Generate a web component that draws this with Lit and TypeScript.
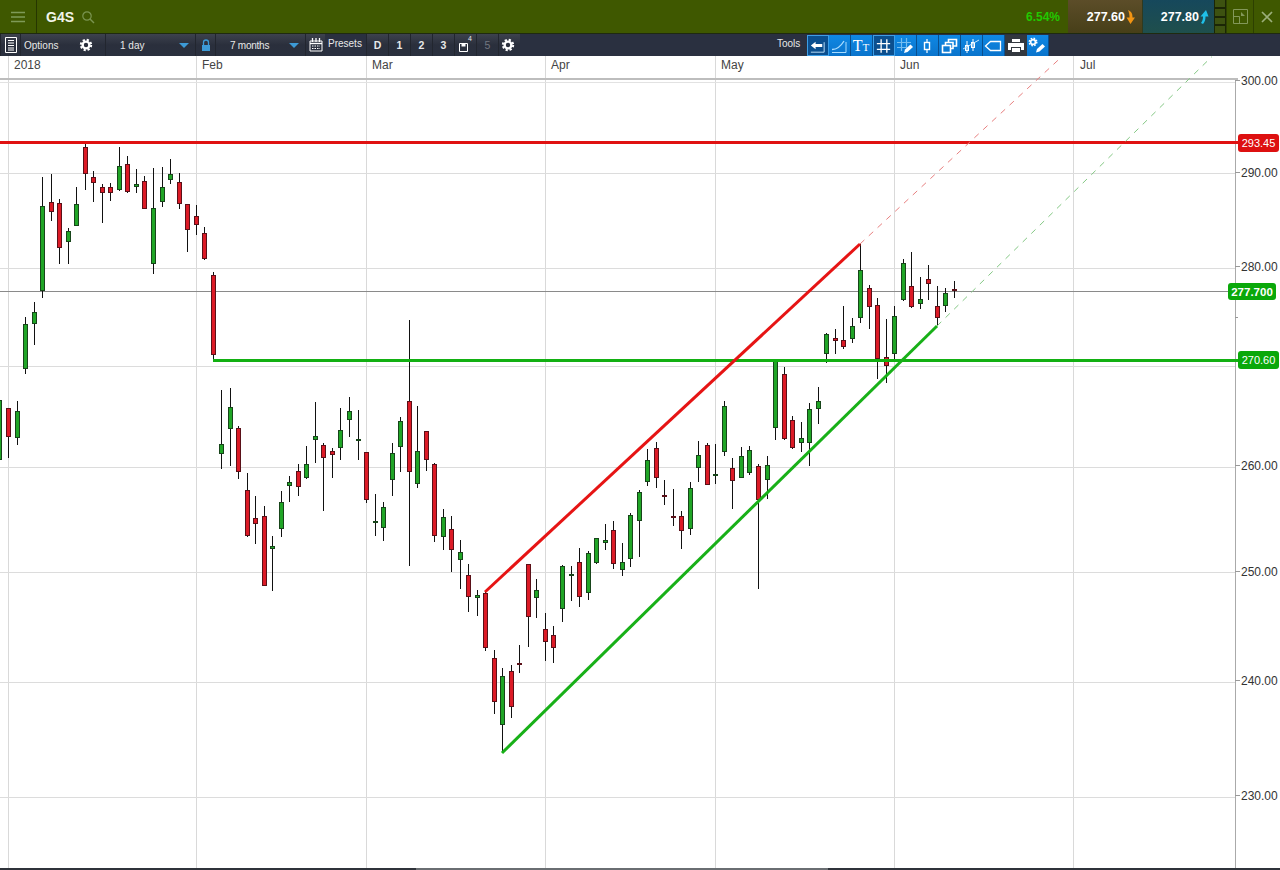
import { LitElement, html, css, svg } from "lit";
import { customElement } from "lit/decorators.js";

type C = [number, number, number, number, number, "g" | "r"];
const candles: C[] = [
  [-1,395,465,400,460,"g"],[8,408,458,408,437,"r"],[17,401,445,411,438,"g"],
  [25,317,374,324,369,"g"],[34,302,345,312,324,"g"],[42,177,298,206,291,"g"],[51,174,221,202,212,"r"],
  [59,199,264,203,248,"r"],[68,228,264,231,242,"g"],[76,187,226,204,226,"g"],[85,144,190,147,174,"r"],
  [93,171,202,177,183,"r"],[102,184,223,187,193,"r"],[110,183,201,187,193,"r"],[119,147,191,166,190,"g"],
  [127,156,193,164,192,"r"],[136,169,193,184,187,"g"],[144,176,209,181,209,"r"],[153,168,274,208,264,"g"],
  [162,167,207,187,202,"g"],[170,159,184,174,180,"g"],[179,173,209,182,204,"r"],[187,204,252,204,230,"r"],
  [196,205,235,216,225,"r"],[204,227,260,233,259,"r"],[213,272,359,275,355,"r"],
  [221,390,469,444,454,"g"],[230,388,466,407,429,"g"],[238,426,479,428,472,"r"],
  [247,473,537,490,536,"r"],[255,496,544,518,524,"r"],[264,506,586,516,586,"r"],[272,536,591,546,549,"g"],
  [281,491,537,502,529,"g"],[289,476,502,482,486,"g"],[298,464,496,471,487,"r"],[306,446,479,464,478,"g"],
  [315,402,463,436,440,"g"],[323,443,511,445,458,"r"],[332,448,478,451,455,"r"],[340,408,460,430,448,"g"],
  [349,397,437,411,420,"g"],[358,410,460,439,441,"g"],[366,452,503,452,500,"r"],[375,494,536,521,523,"g"],
  [383,502,541,507,528,"g"],[392,443,496,453,480,"g"],[400,417,472,421,447,"g"],[409,320,566,401,472,"r"],
  [417,406,488,451,484,"g"],[426,431,471,431,460,"r"],[434,463,542,464,536,"r"],[443,509,550,517,537,"g"],
  [451,516,572,529,550,"r"],[460,540,589,552,560,"g"],[468,564,612,575,597,"r"],[477,590,616,595,598,"g"],
  [485,592,651,593,648,"r"],[494,650,714,658,702,"r"],[502,668,753,676,725,"g"],[511,665,718,671,707,"r"],
  [519,645,673,663,665,"r"],[528,564,647,564,617,"r"],[536,579,618,590,598,"g"],[545,613,661,629,642,"r"],
  [553,626,663,635,648,"r"],[562,565,622,566,609,"g"],[571,566,601,574,576,"g"],[579,548,607,562,597,"r"],
  [588,551,600,553,593,"g"],[596,538,564,538,563,"g"],[605,524,550,540,543,"g"],[613,521,569,530,564,"r"],
  [622,543,576,562,570,"g"],[630,513,567,515,559,"g"],[639,490,557,492,521,"g"],[647,449,486,460,482,"g"],
  [656,442,488,448,478,"r"],[664,480,505,495,497,"r"],[673,489,526,516,518,"r"],[681,511,549,516,531,"r"],
  [690,482,535,488,529,"g"],[698,441,482,455,468,"g"],[707,443,485,445,485,"r"],[715,444,484,474,476,"g"],
  [724,401,456,406,452,"g"],[732,458,509,468,481,"r"],[741,447,478,456,478,"g"],[749,446,475,450,473,"g"],
  [758,464,589,466,500,"r"],[767,456,499,465,480,"g"],[775,360,440,360,428,"g"],[784,367,440,374,439,"r"],
  [792,416,449,420,448,"r"],[801,422,452,438,443,"g"],[809,403,466,409,443,"g"],[818,387,424,401,409,"g"],
  [826,333,363,334,354,"g"],[835,329,354,338,341,"r"],[843,306,349,340,347,"r"],[852,318,343,326,339,"g"],
  [860,243,323,270,318,"g"],[869,285,329,288,307,"r"],[877,298,379,305,359,"r"],[886,319,383,357,366,"r"],
  [894,306,362,316,354,"g"],[903,259,301,263,300,"g"],[911,252,308,286,307,"r"],[920,277,309,299,304,"g"],
  [928,265,300,279,284,"r"],[937,286,325,306,318,"r"],[945,288,312,293,306,"g"],[954,281,298,289,291,"r"],
];
const vGrid = [8, 196, 366, 545, 715, 894, 1073];
const hGrid = [173, 268, 366, 467, 572, 682, 797];
const months: [string, number][] = [["2018",14],["Feb",202],["Mar",372],["Apr",551],["May",721],["Jun",900],["Jul",1080]];
const axis: [string, number][] = [["300.00",81],["290.00",173],["280.00",267],["260.00",466],["250.00",572],["240.00",681],["230.00",796]];

const gear = (c = "#fff") => html`<svg width="14" height="14" viewBox="0 0 14 14"><circle cx="7" cy="7" r="3.4" fill="none" stroke=${c} stroke-width="2.4"/><circle cx="7" cy="7" r="5.2" fill="none" stroke=${c} stroke-width="2" stroke-dasharray="2.2 1.9"/></svg>`;
const caret = html`<svg width="10" height="5" viewBox="0 0 10 5"><path d="M0 0H10L5 5Z" fill="#3d9ad6"/></svg>`;

const toolIcons = [
  html`<svg width="20" height="20" viewBox="0 0 20 20"><path d="M3 9.5L8 5.5V8H15V11H8V13.5Z" fill="#fff"/><path d="M3 16.5H17V6" fill="none" stroke="#bfe2fb" stroke-width="1"/></svg>`,
  html`<svg width="20" height="20" viewBox="0 0 20 20"><path d="M3 13.5C9 13.5 12 10 15 5" fill="none" stroke="#a8dcff" stroke-width="1.3"/><path d="M3 16.5H17V6" fill="none" stroke="#a8dcff" stroke-width="1"/></svg>`,
  html`<span class="tt"><b>T</b><i>T</i></span>`,
  html`<svg width="20" height="20" viewBox="0 0 20 20"><path d="M7.5 3V17M13.5 3V17M3 7.5H17M3 13.5H17" stroke="#fff" stroke-width="1.4"/></svg>`,
  html`<svg width="20" height="20" viewBox="0 0 20 20"><path d="M6.5 2V15M11.5 2V11M2 6.5H16M2 11.5H12" stroke="#75bdf0" stroke-width="1.2"/><path d="M9 17L10 13.5L15.5 8.5L18 11L12.5 16Z" fill="#fff"/></svg>`,
  html`<svg width="20" height="20" viewBox="0 0 20 20"><path d="M10 3V17" stroke="#fff" stroke-width="1.2"/><rect x="7.5" y="6.5" width="5" height="7" fill="#0a7fdc" stroke="#fff" stroke-width="1.4"/></svg>`,
  html`<svg width="20" height="20" viewBox="0 0 20 20"><rect x="3.5" y="9.5" width="8" height="7" fill="none" stroke="#fff" stroke-width="1.6"/><path d="M6.5 9V6.5H14V12.5H12M9.5 6V3.5H17.5V10H14.5" fill="none" stroke="#fff" stroke-width="1.6"/></svg>`,
  html`<svg width="20" height="20" viewBox="0 0 20 20"><path d="M6 5V17M12 3V15" stroke="#fff" stroke-width="1"/><rect x="4.5" y="9.5" width="3" height="5" fill="none" stroke="#fff"/><rect x="10.5" y="6.5" width="3" height="5" fill="none" stroke="#fff"/><path d="M2 13L18 4" stroke="#cfe9fb" stroke-width="1"/></svg>`,
  html`<svg width="20" height="20" viewBox="0 0 20 20"><path d="M2.5 10L7.5 5.5H17.5V14.5H7.5Z" fill="none" stroke="#fff" stroke-width="1.3"/></svg>`,
  html`<svg width="20" height="20" viewBox="0 0 20 20"><rect x="6" y="3" width="8" height="3" fill="#fff"/><path d="M2 7H18V14H15V11H5V14H2Z" fill="#fff"/><rect x="6" y="12" width="8" height="4" fill="#fff"/></svg>`,
  html`<svg width="20" height="20" viewBox="0 0 20 20"><g transform="translate(1 1) scale(.72)">${gear()}</g><path d="M9 16.5L10 13L15.5 8L18 10.5L12.5 15.5Z" fill="#fff"/></svg>`,
];

@customElement("app-root")
export class AppRoot extends LitElement {
  static styles = css`
    :host { display: block; width: 1280px; height: 870px; overflow: hidden; font-family: "Liberation Sans", Arial, sans-serif; background: #fff; }
    .top { display: flex; align-items: stretch; height: 33px; background: #3f5800; border-bottom: 1px solid #1f2a10; color: #fff; }
    .menu { width: 36px; display: flex; align-items: center; justify-content: center; border-right: 1px solid #263600; box-sizing: content-box; }
    .sym { font-size: 14px; font-weight: 700; margin-left: 9px; align-self: center; color: #f2f5ea; }
    .search { margin-left: 7px; align-self: center; display: flex; }
    .grow { flex: 1; }
    .pct { align-self: center; color: #22c800; font-size: 12px; font-weight: 700; margin-right: 8px; }
    .quote { display: flex; align-items: center; justify-content: flex-end; gap: 1px; font-size: 12.5px; font-weight: 700; box-sizing: border-box; }
    .sell { width: 74px; padding-right: 7px; background: linear-gradient(#5c4d29, #473f18); }
    .buy { width: 72px; padding-right: 5px; background: linear-gradient(#16485c, #1f4f4c); border-left: 1px solid #2f3a20; }
    .stack { width: 12px; display: flex; flex-direction: column; gap: 2px; background: #1b2605; padding: 0 1px; box-sizing: border-box; }
    .stack span { flex: 1; background: #3d5210; }
    .win { width: 27px; display: flex; align-items: center; justify-content: center; border-left: 1px solid #2d4000; box-sizing: border-box; }
    .bar { display: flex; height: 22px; background: #2a3040; color: #e8e8e8; font-size: 10px; }
    .cell { display: flex; align-items: center; box-sizing: border-box; height: 22px; background: linear-gradient(#3d424e, #2a2f3c 50%, #2a303e); border-left: 1px solid #22262f; }
    .c20 { width: 20px; justify-content: center; }
    .opts { width: 85px; padding-left: 3px; justify-content: space-between; padding-right: 12px; }
    .sel { width: 90px; padding-left: 14px; padding-right: 6px; justify-content: space-between; }
    .tight { letter-spacing: -0.25px; }
    .presets { width: 41px; padding-left: 3px; padding-bottom: 3px; background: none; border: 0; }
    .pbtn { width: 22px; justify-content: center; font-weight: 700; font-size: 10.5px; position: relative; }
    .pgear { padding-right: 3px; }
    .dim { color: #737780; font-weight: 400; }
    .sup { position: absolute; top: 1px; right: 4px; font-size: 7px; font-weight: 400; }
    .save { margin: 5px 4px 0 0; display: flex; }
    .tools { width: 33px; margin-left: 254px; padding: 0 0 3px 3px; display: flex; align-items: center; box-sizing: border-box; }
    .tool { width: 22px; height: 21px; margin-top: 1px; padding-right: 1px; display: flex; align-items: center; justify-content: center; background: linear-gradient(#0f88e4, #0a74cc); box-sizing: border-box; border-right: 1px solid #0a4f8e; }
    .tool.on { background: #0b4f8f; border: 1px solid #3d9ee6; }
    .tool.print { background: #33383f; border: 0; }
    .tt { color: #fff; font-family: "Liberation Serif", serif; display: flex; align-items: baseline; }
    .tt b { font-size: 16px; font-weight: 400; }
    .tt i { font-size: 11px; font-style: normal; }
    .chart { display: block; width: 1280px; height: 812px; }
    .chart text { font-family: "Liberation Sans", Arial, sans-serif; }
    .month { font-size: 12px; fill: #444; }
    .ax { font-size: 12px; fill: #333; }
    .tag { font-size: 11px; fill: #fff; }
    .tagb { font-size: 11.5px; font-weight: 700; fill: #fff; }
    .foot { height: 2px; background: #2f333a; }
    .thumb { display: block; width: 412px; height: 2px; margin-left: 416px; background: #6a6e72; }
  `;

  render() {
    return html`
      <div class="top">
        <div class="menu"><svg width="16" height="12" viewBox="0 0 16 12"><path d="M1 1.5H15M1 6H15M1 10.5H15" stroke="#7f9a58" stroke-width="1.6"/></svg></div>
        <div class="sym">G4S</div>
        <div class="search"><svg width="14" height="14" viewBox="0 0 14 14"><circle cx="6" cy="6" r="4.2" fill="none" stroke="#7a9450" stroke-width="1.2"/><path d="M9 9L13 13" stroke="#7a9450" stroke-width="1.4"/></svg></div>
        <div class="grow"></div>
        <div class="pct">6.54%</div>
        <div class="quote sell">277.60<svg width="9" height="14" viewBox="0 0 9 14"><path d="M2 0C6 2 6.5 4 6.5 7.500H9L4.500 14L0.500 7.500H3.500C3.500 4.500 3 2.500 2 0Z" fill="#f29412"/></svg></div>
        <div class="quote buy">277.80<svg width="9" height="14" viewBox="0 0 9 14"><path d="M3 14C5 11.500 5.500 9.500 5.500 6.500H8.500L6 0L0.500 6.500H3C3 9 2.500 11 1 13Z" fill="#1fc0e8"/></svg></div>
        <div class="stack"><span></span><span></span><span></span><span></span></div>
        <div class="win"><svg width="15" height="15" viewBox="0 0 15 15"><path d="M.5.5H14.500V14.500H.5ZM.5 7.500H6.500V14.500M7.500.5" fill="none" stroke="#83985a"/><path d="M8 3V7H12Z" fill="#83985a"/></svg></div>
        <div class="win"><svg width="12" height="12" viewBox="0 0 12 12"><path d="M1 1L11 11M11 1L1 11" stroke="#9caf7a" stroke-width="1.7"/></svg></div>
      </div>
      <div class="bar">
        <div class="cell c20"><svg width="12" height="16" viewBox="0 0 12 16"><path d="M.5.5H11.500V15.500H.5Z" fill="none" stroke="#fff"/><path d="M3 3.500H9M3 6H9M3 8.500H9M3 11H9M3 13H9" stroke="#fff"/></svg></div>
        <div class="cell opts"><span>Options</span>${gear()}</div>
        <div class="cell sel"><span>1 day</span>${caret}</div>
        <div class="cell c20"><svg width="10" height="13" viewBox="0 0 10 13"><path d="M2.500 6V3.500a2.500 2.500 0 0 1 5 0V6" fill="none" stroke="#3d9ad6" stroke-width="1.3"/><rect x="1" y="6" width="8" height="6" fill="#3d9ad6"/></svg></div>
        <div class="cell sel"><span class="tight">7 months</span>${caret}</div>
        <div class="cell c20"><svg width="14" height="14" viewBox="0 0 14 14"><path d="M1 3H13V13H1Z" fill="#2a303e" stroke="#fff"/><path d="M3.500 0V4M7 0V4M10.500 0V4" stroke="#fff" stroke-width="1.3"/><path d="M1 5.500H13" stroke="#fff" stroke-width="1.4"/><path d="M3 8H11M3 10.500H11" stroke="#fff" stroke-dasharray="1.5 1"/></svg></div>
        <div class="cell presets">Presets</div>
        <div class="cell pbtn">D</div><div class="cell pbtn">1</div><div class="cell pbtn">2</div><div class="cell pbtn">3</div>
        <div class="cell pbtn"><span class="save"><svg width="9" height="9" viewBox="0 0 9 9"><path d="M.5.5H8.500V8.500H.5Z" fill="none" stroke="#fff"/><path d="M2.500 1H6.500V3.500H2.500Z" fill="#fff"/></svg></span><span class="sup">4</span></div>
        <div class="cell pbtn dim">5</div>
        <div class="cell pbtn pgear">${gear()}</div>
        <div class="tools">Tools</div>
        ${toolIcons.map((ic, i) => html`<div class="tool ${i === 0 || i === 3 ? "on" : ""} ${i === 9 ? "print" : ""}">${ic}</div>`)}
      </div>
      <svg class="chart" viewBox="0 56 1280 812" shape-rendering="crispEdges">
        <rect x="0" y="56" width="1280" height="812" fill="#fff"/>
        ${vGrid.map((x) => svg`<rect x=${x} y="56" width="1" height="812" fill="#d9d9d9"/>`)}
        <rect x="0" y="78" width="1238" height="2" fill="#bdbdbd"/>
        <rect x="0" y="82" width="1235" height="1" fill="#e2e2e2"/>
        ${hGrid.map((y) => svg`<rect x="0" y=${y} width="1235" height="1" fill="#dcdcdc"/>`)}
        <rect x="1235" y="80" width="1" height="788" fill="#aaa"/>
        ${axis.map(([, y]) => svg`<rect x="1235" y=${y - 1} width="5" height="1" fill="#999"/>`)}
        <rect x="1235" y="317" width="3" height="1" fill="#999"/>
        <rect x="0" y="291" width="1228" height="1" fill="#8a8a8a"/>
        ${months.map(([t, x]) => svg`<text class="month" x=${x} y="69">${t}</text>`)}
        ${axis.map(([t, y]) => svg`<text class="ax" x="1241" y=${y + 4}>${t}</text>`)}
        ${candles.map(([x, wt, wb, bt, bb, c]) => svg`
          <rect x=${x} y=${wt} width="1" height=${wb - wt} fill="#111"/>
          <rect x=${x - 1.5} y=${bt + 0.5} width="4" height=${bb - bt - 1} fill=${c === "g" ? "#20a526" : "#dc1a26"} stroke=${c === "g" ? "#17451a" : "#5a1018"} stroke-width="1"/>
        `)}
        <rect x="0" y="141" width="1238" height="3" fill="#e01212"/>
        <rect x="213" y="359" width="1025" height="3" fill="#12b012"/>
        <g shape-rendering="auto">
          <path d="M860 244L1062 56.500" stroke="#e88080" stroke-width="1" stroke-dasharray="6 6" fill="none"/>
          <path d="M937 326L1212 56.500" stroke="#84c884" stroke-width="1" stroke-dasharray="6 6" fill="none"/>
          <path d="M485 592L860 244" stroke="#e61414" stroke-width="3" fill="none"/>
          <path d="M502 753L937 326" stroke="#18b018" stroke-width="3" fill="none"/>
          <rect x="1238" y="134" width="41" height="18" rx="3" fill="#dd1010"/>
          <text class="tag" x="1258.500" y="147" text-anchor="middle">293.45</text>
          <rect x="1228" y="283" width="48" height="17" rx="3" fill="#0aa80a"/>
          <text class="tagb" x="1252" y="296" text-anchor="middle">277.700</text>
          <rect x="1238" y="351" width="41" height="18" rx="3" fill="#0aa80a"/>
          <text class="tag" x="1258.500" y="364" text-anchor="middle">270.60</text>
        </g>
      </svg>
      <div class="foot"><span class="thumb"></span></div>
    `;
  }
}
